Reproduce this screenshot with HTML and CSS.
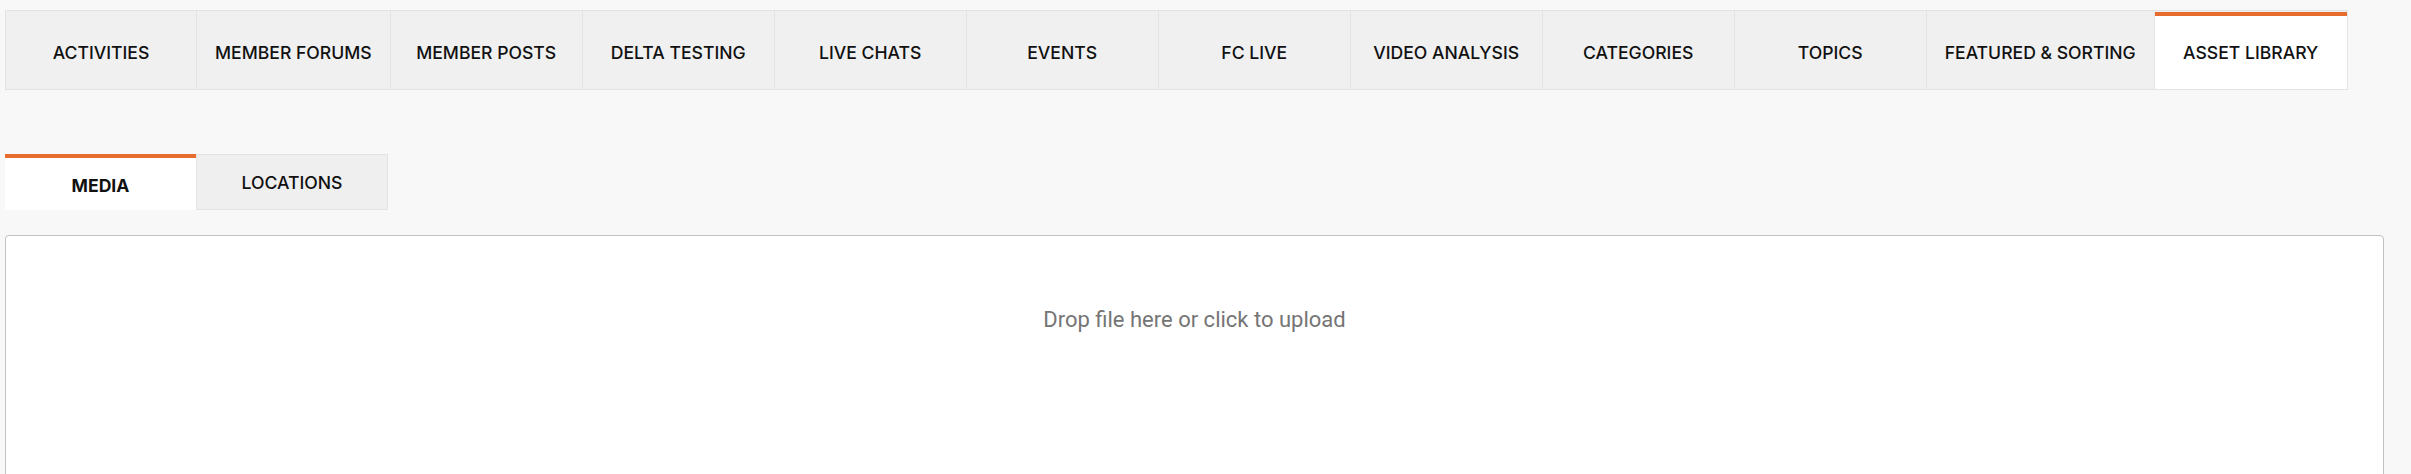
FILE: index.html
```html
<!DOCTYPE html>
<html lang="en">
<head>
    <meta charset="UTF-8">
    <title>Asset Library</title>
    <link rel="stylesheet" href="styles.css">
</head>
<body>
<div class="page">
    <nav class="main-tabs">
        <a class="tab">ACTIVITIES</a>
        <a class="tab">MEMBER FORUMS</a>
        <a class="tab">MEMBER POSTS</a>
        <a class="tab">DELTA TESTING</a>
        <a class="tab">LIVE CHATS</a>
        <a class="tab">EVENTS</a>
        <a class="tab">FC LIVE</a>
        <a class="tab">VIDEO ANALYSIS</a>
        <a class="tab">CATEGORIES</a>
        <a class="tab">TOPICS</a>
        <a class="tab">FEATURED &amp; SORTING</a>
        <a class="tab active">ASSET LIBRARY</a>
    </nav>

    <div class="sub-tabs">
        <a class="sub-tab active">MEDIA</a>
        <a class="sub-tab">LOCATIONS</a>
    </div>

    <div class="dropzone">
        <span class="dz-message">Drop file here or click to upload</span>
    </div>
</div>
</body>
</html>
```

FILE: styles.css
```css
html, body { margin: 0; padding: 0; background: #f8f8f8; }
body { font-family: Inter, "Liberation Sans", sans-serif; color: #111; }
.page { padding: 10px 27px 0 5px; }

.main-tabs { display: inline-flex; background: #f0f0f0; border: 1px solid #e3e3e3; }
.tab { box-sizing: border-box; min-width: 192px; height: 78px; padding: 4px 18px 0; border-right: 1px solid #e3e3e3; display: flex; align-items: center; justify-content: center; font-size: 17.6px; font-weight: 500; white-space: nowrap; cursor: pointer; }
.tab:first-child { min-width: 191px; }
.tab:last-child { border-right: none; }
.tab.active { background: #fff; border-top: 4px solid #e66c30; padding-top: 0; margin-top: 1px; height: 77px; }

.sub-tabs { display: flex; margin-top: 64px; }
.sub-tab { box-sizing: border-box; width: 192px; height: 56px; display: flex; align-items: center; justify-content: center; font-size: 17.6px; font-weight: 500; background: #efefef; border: 1px solid #e3e3e3; cursor: pointer; }
.sub-tab.active { width: 191px; background: #fff; border: none; border-top: 4px solid #e66c30; padding-top: 2px; font-weight: 700; }

.dropzone { box-sizing: border-box; margin-top: 25px; height: 245px; background: #fff; border: 1px solid #c2c2c2; border-radius: 4px; text-align: center; padding-top: 71px; cursor: pointer; }
.dz-message { font-family: Roboto, "Liberation Sans", sans-serif; font-size: 22px; line-height: 26px; color: #757575; }
```
